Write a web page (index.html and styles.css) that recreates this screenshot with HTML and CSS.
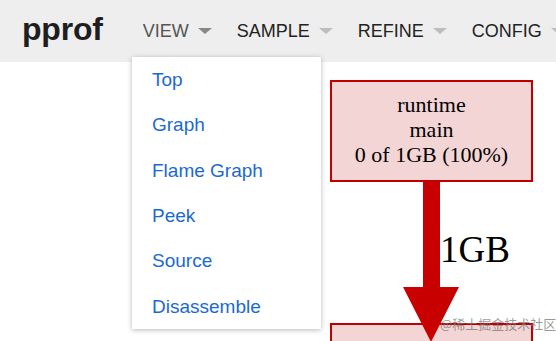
FILE: index.html
```html
<!DOCTYPE html>
<html>
<head>
<meta charset="utf-8">
<link rel="stylesheet" href="styles.css">
</head>
<body>
<header class="header">
  <div class="logo">pprof</div>
  <nav class="nav">
    <div class="nav-item active">VIEW <span class="caret"></span></div>
    <div class="nav-item">SAMPLE <span class="caret"></span></div>
    <div class="nav-item">REFINE <span class="caret"></span></div>
    <div class="nav-item">CONFIG <span class="caret"></span></div>
  </nav>
  <ul class="dropdown">
    <li>Top</li>
    <li>Graph</li>
    <li>Flame Graph</li>
    <li>Peek</li>
    <li>Source</li>
    <li>Disassemble</li>
  </ul>
</header>
<main class="graph">
  <svg class="graph-svg" width="556" height="279" viewBox="0 0 556 279">
    <rect x="331" y="262" width="201" height="40" class="node"/>
    <rect x="331" y="19" width="201" height="100" class="node"/>
    <text class="node-text" x="431.5" y="50">runtime</text>
    <text class="node-text" x="431.5" y="75">main</text>
    <text class="node-text" x="431.5" y="100">0 of 1GB (100%)</text>
    <rect x="423" y="120" width="17" height="106" class="edge"/>
    <polygon points="403,225 459,225 431,280" class="edge"/>
    <text class="edge-text" x="440" y="200">1GB</text>
  </svg>
  <span class="credit">@稀土掘金技术社区</span>
</main>
</body>
</html>
```

FILE: styles.css
```css
* { box-sizing: border-box; }
html, body {
  margin: 0;
  padding: 0;
  background: #ffffff;
  width: 556px;
  height: 341px;
  overflow: hidden;
  font-family: "Liberation Sans", Arial, sans-serif;
}
.header {
  position: relative;
  z-index: 2;
  display: flex;
  align-items: center;
  height: 62px;
  padding-left: 22px;
  background: #eeeeee;
}
.logo {
  font-size: 32px;
  font-weight: bold;
  color: #1e1e1e;
  margin-right: 40px;
  margin-top: -4px;
  letter-spacing: -0.2px;
}
.nav {
  display: flex;
  align-items: center;
  flex: 1;
  min-width: 0;
  overflow: hidden;
}
.nav-item {
  display: flex;
  align-items: center;
  flex: none;
  font-size: 18px;
  color: #222222;
  margin-right: 25px;
  white-space: nowrap;
}
.nav-item.active { color: #555555; }
.caret {
  display: inline-block;
  width: 0;
  height: 0;
  margin-left: 9px;
  border-left: 7px solid transparent;
  border-right: 7px solid transparent;
  border-top: 6px solid #bdbdbd;
}
.nav-item.active .caret { border-top-color: #888888; }
.dropdown {
  position: absolute;
  left: 132px;
  top: 57px;
  width: 189px;
  margin: 0;
  padding: 0;
  list-style: none;
  background: #ffffff;
  box-shadow: 0 1px 5px rgba(0, 0, 0, 0.28);
}
.dropdown li {
  display: flex;
  align-items: center;
  height: 45.33px;
  padding-left: 20px;
  padding-top: 1px;
  font-size: 19px;
  color: #1a6ad2;
}
.graph {
  position: relative;
  height: 279px;
}
.graph-svg { display: block; }
.node {
  fill: #f3d5d5;
  stroke: #c00000;
  stroke-width: 2;
}
.edge { fill: #c80000; }
.node-text {
  font-family: "Liberation Serif", "Times New Roman", serif;
  font-size: 22px;
  fill: #000000;
  text-anchor: middle;
}
.edge-text {
  font-family: "Liberation Serif", "Times New Roman", serif;
  font-size: 37px;
  fill: #000000;
}
.credit {
  position: absolute;
  left: 440px;
  top: 252px;
  font-family: "Noto Sans CJK SC", sans-serif;
  font-size: 13px;
  color: rgba(120, 120, 120, 0.75);
  white-space: nowrap;
}
```
